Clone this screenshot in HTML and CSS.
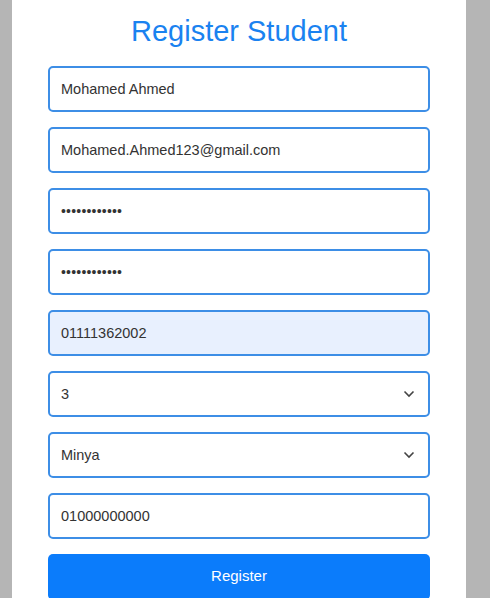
FILE: index.html
```html
<!DOCTYPE html>
<html>
<head>
<meta charset="utf-8">
<link rel="stylesheet" href="styles.css">
</head>
<body>
<div class="card">
  <h1 class="title">Register Student</h1>
  <form class="form">
    <div class="field"><span>Mohamed Ahmed</span></div>
    <div class="field"><span>Mohamed.Ahmed123@gmail.com</span></div>
    <div class="field"><span class="dots">••••••••••••</span></div>
    <div class="field"><span class="dots">••••••••••••</span></div>
    <div class="field autofill"><span>01111362002</span></div>
    <div class="field select"><span>3</span>
      <svg class="chev" width="12" height="8" viewBox="0 0 12 8"><path d="M1.5 1.5 L6 6 L10.5 1.5" fill="none" stroke="#444" stroke-width="1.6"/></svg>
    </div>
    <div class="field select"><span>Minya</span>
      <svg class="chev" width="12" height="8" viewBox="0 0 12 8"><path d="M1.5 1.5 L6 6 L10.5 1.5" fill="none" stroke="#444" stroke-width="1.6"/></svg>
    </div>
    <div class="field"><span>01000000000</span></div>
    <div class="button">Register</div>
  </form>
</div>
</body>
</html>
```

FILE: styles.css
```css
html, body {
  margin: 0;
  padding: 0;
  background: #b5b5b5;
  height: 598px;
  overflow: hidden;
}
body {
  font-family: "Liberation Sans", Arial, sans-serif;
}
.card {
  width: 454px;
  margin-left: 12px;
  background: #ffffff;
  height: 598px;
  box-sizing: border-box;
  padding: 0 36px;
}
.title {
  margin: 0;
  padding-top: 14px;
  height: 66px;
  box-sizing: border-box;
  text-align: center;
  color: #1a82f0;
  font-weight: normal;
  font-size: 29px;
  line-height: 34px;
}
.form {
  display: flex;
  flex-direction: column;
  gap: 15px;
}
.field {
  height: 46px;
  box-sizing: border-box;
  border: 2px solid #3d8ee6;
  border-radius: 5px;
  display: flex;
  align-items: center;
  padding: 0 11px;
  font-size: 14.5px;
  color: #333;
  background: #fff;
}
.dots {
  font-size: 14px;
  letter-spacing: 0.2px;
  color: #333;
}
.autofill {
  background: #e8f0fe;
}
.select {
  justify-content: space-between;
}
.chev {
  margin-right: 2px;
}
.button {
  height: 46px;
  margin-top: 0;
  background: #0b7cfb;
  border-radius: 5px;
  color: #fff;
  font-size: 15px;
  display: flex;
  justify-content: center;
  align-items: center;
  padding-bottom: 3px;
  box-sizing: border-box;
}
```
